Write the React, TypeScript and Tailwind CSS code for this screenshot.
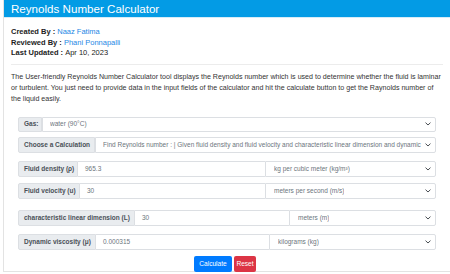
import React from 'react';

function Chevron() {
  return (
    <svg width="6" height="4" viewBox="0 0 6 4" fill="none" className="text-[#343a40]">
      <path d="M0.8 0.9L3 3L5.2 0.9" stroke="currentColor" strokeWidth="0.9" strokeLinecap="round" strokeLinejoin="round" />
    </svg>
  );
}

function Select({ text, className = '' }: { text: string; className?: string }) {
  return (
    <div
      className={`flex h-full min-w-0 items-center justify-between border border-[#dcdfe3] bg-white pl-[7px] pr-[4px] text-[#6c757d] ${className}`}
    >
      <span className="min-w-0 overflow-hidden whitespace-nowrap">{text}</span>
      <span className="ml-[3px] shrink-0">
        <Chevron />
      </span>
    </div>
  );
}

function Label({ children, w }: { children: React.ReactNode; w: string }) {
  return (
    <div
      className={`flex h-full shrink-0 items-center whitespace-nowrap rounded-l-[2px] border border-[#dcdfe3] bg-[#e9ecef] pl-[5px] font-bold text-[#495057] ${w}`}
    >
      {children}
    </div>
  );
}

function UnitRow({
  label,
  labelW,
  value,
  unit,
  inputW,
  className = '',
}: {
  label: string;
  labelW: string;
  value: string;
  unit: string;
  inputW: string;
  className?: string;
}) {
  return (
    <div className={`flex h-[16px] text-[6.5px] ${className}`}>
      <Label w={labelW}>{label}</Label>
      <div className={`flex h-full items-center border-y border-[#dcdfe3] bg-white pl-[7px] text-[#6c757d] ${inputW}`}>
        {value}
      </div>
      <Select text={unit} className="flex-1 rounded-r-[2px] pl-[8px]" />
    </div>
  );
}

export default function App() {
  return (
    <div className="h-[274px] w-[450px] overflow-hidden bg-white font-['Liberation_Sans',Arial,sans-serif]">
      <div className="ml-[3px] h-[272px] border-b border-l border-[#e3e3e3]">
        <div className="h-[18px] border-b border-[#d6ecf8] bg-[#039be5] pl-[7px] text-[11.6px] leading-[17px] text-white">
          Reynolds Number Calculator
        </div>

        <div className="px-[7px] pt-[9px]">
          <div className="text-[7.5px] leading-[10.5px] text-[#222]">
            <div>
              <b>Created By : </b>
              <span className="text-[#1e88e5]">Naaz Fatima</span>
            </div>
            <div>
              <b>Reviewed By : </b>
              <span className="text-[#1e88e5]">Phani Ponnapalli</span>
            </div>
            <div>
              <b>Last Updated : </b>
              <span>Apr 10, 2023</span>
            </div>
          </div>

          <div className="mt-[5px] h-px bg-[#ececec]" />

          <p className="mt-[7px] text-[7.1px] leading-[11px] text-[#333]">
            The User-friendly Reynolds Number Calculator tool displays the Reynolds number which is used to determine
            whether the fluid is laminar or turbulent. You just need to provide data in the input fields of the
            calculator and hit the calculate button to get the Raynolds number of the liquid easily.
          </p>

          <div className="ml-[7px] mr-[7px] mt-[12px]">
            <div className="flex h-[15px] text-[6.5px]">
              <Label w="w-[24px]">Gas:</Label>
              <Select text="water (90°C)" className="flex-1 rounded-r-[2px]" />
            </div>

            <div className="mt-[5px] flex h-[16px] text-[6.5px]">
              <Label w="w-[77px]">Choose a Calculation</Label>
              <Select
                text="Find Reynolds number : | Given fluid density and fluid velocity and characteristic linear dimension and dynamic vi:"
                className="flex-1 rounded-r-[2px]"
              />
            </div>

            <UnitRow className="mt-[8px]" label="Fluid density (ρ)" labelW="w-[60px]" value="965.3" unit="kg per cubic meter (kg/m³)" inputW="w-[187px]" />
            <UnitRow className="mt-[6px]" label="Fluid velocity (u)" labelW="w-[62px]" value="30" unit="meters per second (m/s)" inputW="w-[185px]" />
            <UnitRow className="mt-[11px]" label="characteristic linear dimension (L)" labelW="w-[117px]" value="30" unit="meters (m)" inputW="w-[154px]" />
            <UnitRow className="mt-[8px]" label="Dynamic viscosity (μ)" labelW="w-[78px]" value="0.000315" unit="kilograms (kg)" inputW="w-[173px]" />

            <div className="mt-[6px] flex justify-center gap-[2px] pr-[4px] text-[6.6px] text-white">
              <button className="h-[16px] w-[38px] rounded-[2px] bg-[#007bff]">Calculate</button>
              <button className="h-[16px] w-[22px] rounded-[2px] bg-[#dc3545]">Reset</button>
            </div>
          </div>
        </div>
      </div>
    </div>
  );
}
